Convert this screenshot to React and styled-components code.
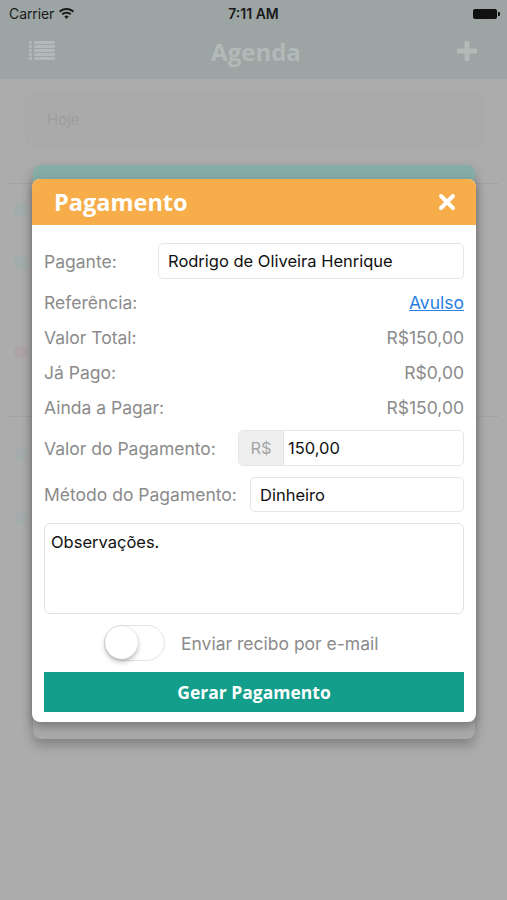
import React, { useState } from 'react';
import styled, { createGlobalStyle } from 'styled-components';

const GlobalStyle = createGlobalStyle`
  html, body {
    margin: 0;
    padding: 0;
    background: #acacac;
  }
  body {
    font-family: Inter, "Noto Sans", "Liberation Sans", sans-serif;
  }
`;

const Screen = styled.div`
  position: relative;
  width: 507px;
  height: 900px;
  overflow: hidden;
  background: #acacac;
`;

const TopBar = styled.div`
  background: #9ca5a3;
  height: 79px;
  display: flex;
  flex-direction: column;
`;

const StatusBar = styled.div`
  height: 27px;
  display: flex;
  align-items: center;
  justify-content: space-between;
  padding: 0 8px 0 9px;
  font-size: 14px;
  color: #1a1a1a;
  position: relative;
`;

const Carrier = styled.div`
  display: flex;
  align-items: center;
  gap: 5px;
  letter-spacing: -0.1px;
`;

const Clock = styled.div`
  position: absolute;
  left: 0;
  right: 0;
  text-align: center;
  font-weight: 600;
  pointer-events: none;
`;

const Battery = styled.div`
  width: 24px;
  height: 10px;
  background: #111;
  border-radius: 2px;
  position: relative;
  margin-right: 2px;
  &::after {
    content: '';
    position: absolute;
    right: -3px;
    top: 3px;
    width: 2px;
    height: 4px;
    background: #111;
    border-radius: 0 1px 1px 0;
  }
`;

const NavBar = styled.div`
  flex: 1;
  display: flex;
  align-items: center;
  justify-content: space-between;
  padding: 0 30px 4px 29px;
`;

const NavTitle = styled.div`
  font-size: 24px;
  font-weight: 700;
  color: #b1bab8;
  font-family: "Open Sans", sans-serif;
`;

const Content = styled.div`
  padding: 13px 24px 0 26px;
`;

const SearchField = styled.div`
  height: 55px;
  border-radius: 10px;
  background: #aaaaaa;
  box-shadow: 0 0 2px rgba(0, 0, 0, 0.06);
  display: flex;
  align-items: center;
  padding-left: 21px;
  color: #9d9d9d;
  font-size: 15px;
`;

const List = styled.div`
  margin-top: 36px;
  margin-left: -18px;
  margin-right: -16px;
`;

const ListRow = styled.div`
  height: ${p => p.h}px;
  border-top: ${p => (p.divider ? '1px solid #a3a3a3' : 'none')};
  display: flex;
  flex-direction: column;
  justify-content: space-around;
  padding-left: 6px;
`;

const Dot = styled.div`
  width: 14px;
  height: 14px;
  border-radius: 50%;
  background: ${p => p.color};
  opacity: 0.25;
`;

const BackCard = styled.div`
  position: absolute;
  left: 33px;
  top: 165px;
  width: 442px;
  height: 574px;
  border-radius: 8px;
  background: #a9a9a9;
  overflow: hidden;
  box-shadow: 0 6px 12px rgba(0, 0, 0, 0.25);
  &::before {
    content: '';
    display: block;
    height: 20px;
    background: #86aca6;
  }
`;

const Modal = styled.div`
  position: absolute;
  left: 32px;
  top: 179px;
  width: 444px;
  height: 543px;
  background: #fff;
  border-radius: 8px;
  overflow: hidden;
  box-shadow: 0 4px 10px rgba(0, 0, 0, 0.3);
  display: flex;
  flex-direction: column;
`;

const ModalHeader = styled.div`
  height: 46px;
  background: #f6ad4a;
  display: flex;
  align-items: center;
  justify-content: space-between;
  padding: 0 20px 0 22px;
`;

const ModalTitle = styled.div`
  color: #fff;
  font-family: "Open Sans", sans-serif;
  font-weight: 700;
  font-size: 23.5px;
`;

const ModalBody = styled.div`
  padding: 18px 12px 10px 12px;
  display: flex;
  flex-direction: column;
`;

const FieldRow = styled.div`
  display: flex;
  align-items: center;
  height: ${p => p.h || 36}px;
  margin-top: ${p => p.mt || 0}px;
  justify-content: ${p => (p.spread ? 'space-between' : 'flex-start')};
`;

const Label = styled.div`
  color: #8b8b8b;
  font-size: 17.5px;
  width: ${p => (p.w ? `${p.w}px` : 'auto')};
  flex-shrink: 0;
  white-space: nowrap;
`;

const Value = styled.div`
  color: #8b8b8b;
  font-size: 17.5px;
`;

const Link = styled.a`
  color: #2a7fe2;
  font-size: 17.5px;
  text-decoration: underline;
  cursor: pointer;
`;

const InputBox = styled.div`
  flex: 1;
  height: 100%;
  box-sizing: border-box;
  border: 1px solid #e6e6e6;
  border-radius: 5px;
  display: flex;
  align-items: center;
  overflow: hidden;
`;

const InputText = styled.div`
  padding-left: ${p => p.pl || 9}px;
  font-size: 16.5px;
  color: #111;
`;

const Addon = styled.div`
  width: 44px;
  height: 100%;
  background: #efefef;
  border-right: 1px solid #e1e1e1;
  display: flex;
  align-items: center;
  justify-content: center;
  color: #a6a6a6;
  font-size: 16.5px;
`;

const TextArea = styled.div`
  margin-top: 11px;
  height: 91px;
  box-sizing: border-box;
  border: 1.5px solid #e2e2e2;
  border-radius: 6px;
  padding: 8px 6px;
  font-size: 16.5px;
  color: #111;
`;

const ToggleRow = styled.div`
  margin-top: 11px;
  height: 36px;
  display: flex;
  align-items: center;
  gap: 16px;
  padding-left: 60px;
`;

const Track = styled.button`
  width: 61px;
  height: 36px;
  border-radius: 18px;
  border: 1.5px solid ${p => (p.on ? '#4cd964' : '#e4e4e4')};
  background: ${p => (p.on ? '#4cd964' : '#fff')};
  position: relative;
  padding: 0;
  cursor: pointer;
  flex-shrink: 0;
`;

const Knob = styled.span`
  position: absolute;
  top: 0;
  left: ${p => (p.on ? '26px' : '0')};
  width: 33px;
  height: 33px;
  border-radius: 50%;
  background: #fff;
  box-shadow: 0 3px 5px rgba(0, 0, 0, 0.25), 0 0 1px rgba(0, 0, 0, 0.2);
`;

const ToggleLabel = styled.div`
  color: #8b8b8b;
  font-size: 17.5px;
`;

const SubmitButton = styled.button`
  margin-top: 11px;
  height: 40px;
  border: none;
  background: #129e8b;
  color: #fff;
  font-family: "Open Sans", sans-serif;
  font-weight: 700;
  font-size: 17.5px;
  cursor: pointer;
`;

const ListIcon = () => (
  <svg width="26" height="20" viewBox="0 0 26 20" fill="#b1bab8">
    {[0, 4, 8, 12, 16].map(y => (
      <g key={y}>
        <rect x="0" y={y} width="3" height="3" rx="1" />
        <rect x="5" y={y} width="21" height="3" rx="1" />
      </g>
    ))}
  </svg>
);

const PlusIcon = () => (
  <svg width="20" height="20" viewBox="0 0 20 20" fill="#b1bab8">
    <rect x="7.5" y="0" width="5" height="20" rx="1" />
    <rect x="0" y="7.5" width="20" height="5" rx="1" />
  </svg>
);

const WifiIcon = () => (
  <svg width="15" height="11" viewBox="0 0 15 11" fill="#1a1a1a">
    <path d="M7.5 0C4.6 0 2 1.1 0 3l1.3 1.4C2.9 2.9 5.1 2 7.5 2s4.6.9 6.2 2.4L15 3C13 1.1 10.4 0 7.5 0z" />
    <path d="M7.5 3.8c-1.9 0-3.6.7-4.9 1.9L4 7.1c.9-.9 2.1-1.4 3.5-1.4s2.6.5 3.5 1.4l1.4-1.4C11.1 4.5 9.4 3.8 7.5 3.8z" />
    <path d="M7.5 7.5c-.9 0-1.6.3-2.2.9L7.5 11l2.2-2.6c-.6-.6-1.3-.9-2.2-.9z" />
  </svg>
);

const CloseIcon = () => (
  <svg width="18" height="18" viewBox="0 0 18 18">
    <path d="M3 3L15 15M15 3L3 15" stroke="#fff" strokeWidth="4" strokeLinecap="round" />
  </svg>
);

const rows = [
  { h: 52, divider: true, dot: '#7fb0a8' },
  { h: 52, divider: false, dot: '#7fb0a8' },
  { h: 128, divider: false, dot: '#b09090' },
  { h: 76, divider: true, dot: '#8fb0aa' },
  { h: 52, divider: false, dot: '#8fb0aa' },
];

const App = () => {
  const [sendReceipt, setSendReceipt] = useState(false);

  return (
    <>
      <GlobalStyle />
      <Screen>
        <TopBar>
          <StatusBar>
            <Carrier>
              Carrier <WifiIcon />
            </Carrier>
            <Clock>7:11 AM</Clock>
            <Battery />
          </StatusBar>
          <NavBar>
            <ListIcon />
            <NavTitle>Agenda</NavTitle>
            <PlusIcon />
          </NavBar>
        </TopBar>
        <Content>
          <SearchField>Hoje</SearchField>
          <List>
            {rows.map((r, i) => (
              <ListRow key={i} h={r.h} divider={r.divider}>
                <Dot color={r.dot} />
              </ListRow>
            ))}
          </List>
        </Content>

        <BackCard />
        <Modal>
          <ModalHeader>
            <ModalTitle>Pagamento</ModalTitle>
            <CloseIcon />
          </ModalHeader>
          <ModalBody>
            <FieldRow>
              <Label w={114}>Pagante:</Label>
              <InputBox>
                <InputText>Rodrigo de Oliveira Henrique</InputText>
              </InputBox>
            </FieldRow>
            <FieldRow h={35} mt={6} spread>
              <Label>Referência:</Label>
              <Link>Avulso</Link>
            </FieldRow>
            <FieldRow h={35} spread>
              <Label>Valor Total:</Label>
              <Value>R$150,00</Value>
            </FieldRow>
            <FieldRow h={35} spread>
              <Label>Já Pago:</Label>
              <Value>R$0,00</Value>
            </FieldRow>
            <FieldRow h={35} spread>
              <Label>Ainda a Pagar:</Label>
              <Value>R$150,00</Value>
            </FieldRow>
            <FieldRow mt={5}>
              <Label w={194}>Valor do Pagamento:</Label>
              <InputBox>
                <Addon>R$</Addon>
                <InputText pl={4}>150,00</InputText>
              </InputBox>
            </FieldRow>
            <FieldRow h={35} mt={11}>
              <Label w={206}>Método do Pagamento:</Label>
              <InputBox>
                <InputText>Dinheiro</InputText>
              </InputBox>
            </FieldRow>
            <TextArea>Observações.</TextArea>
            <ToggleRow>
              <Track on={sendReceipt} onClick={() => setSendReceipt(!sendReceipt)}>
                <Knob on={sendReceipt} />
              </Track>
              <ToggleLabel>Enviar recibo por e-mail</ToggleLabel>
            </ToggleRow>
            <SubmitButton>Gerar Pagamento</SubmitButton>
          </ModalBody>
        </Modal>
      </Screen>
    </>
  );
};

export default App;
